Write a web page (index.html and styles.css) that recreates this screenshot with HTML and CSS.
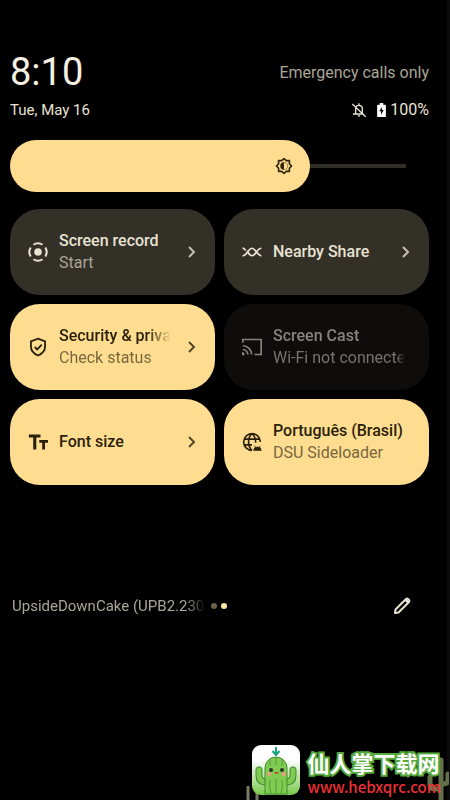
FILE: index.html
```html
<!DOCTYPE html>
<html lang="en">
<head>
    <meta charset="UTF-8">
    <meta name="viewport" content="width=device-width, initial-scale=1">
    <title>Quick Settings</title>
    <link rel="stylesheet" href="styles.css">
</head>
<body>
<div class="panel">
    <header class="status">
        <div class="row">
            <h1 class="clock">8:10</h1>
            <span class="carrier">Emergency calls only</span>
        </div>
        <div class="row">
            <span class="date">Tue, May 16</span>
            <div class="state">
                <svg class="bell" viewBox="0 0 24 24"><path d="M12 2v3M7 9.500C7 7 9 5 12 5s5 2 5 5v8M7 9v9M3 18h16M2 3l20 19" fill="none" stroke="currentColor" stroke-width="2"/><path d="M10 20h4a2 2 0 0 1-4 0z" fill="currentColor"/></svg>
                <svg class="battery" viewBox="0 0 10 16"><path d="M3 0h4v2h2a1 1 0 0 1 1 1v12a1 1 0 0 1-1 1H1a1 1 0 0 1-1-1V3a1 1 0 0 1 1-1h2z" fill="currentColor"/><path d="M5.500 4.500L2.500 9.500h2v4l3-5.500h-2z" fill="#000"/></svg>
                <span>100%</span>
            </div>
        </div>
    </header>

    <div class="brightness">
        <input type="range" min="0" max="100" value="72" aria-label="Brightness">
        <svg viewBox="0 0 24 24"><path d="M12 2l3 2.800 4.200 0 0 4.200L22 12l-2.800 3 0 4.200-4.200 0-3 2.800-3-2.800-4.200 0 0-4.200L2 12l2.800-3 0-4.200 4.200 0z" fill="none" stroke="currentColor" stroke-width="2.200" stroke-linejoin="round"/><path d="M12 7a5 5 0 0 0 0 10z" fill="currentColor"/><path d="M12 7a5 5 0 0 1 0 10" fill="none" stroke="currentColor" stroke-width=".6"/></svg>
    </div>

    <main class="tiles">
        <button class="tile">
            <svg class="icon" viewBox="0 0 24 24"><circle cx="12" cy="12" r="4.500" fill="currentColor"/><path d="M6.500 3.300a10.200 10.200 0 0 1 11 0M20.700 6.500a10.200 10.200 0 0 1 0 11M17.500 20.700a10.200 10.200 0 0 1-11 0M3.300 17.500a10.200 10.200 0 0 1 0-11" fill="none" stroke="currentColor" stroke-width="2.400"/></svg>
            <span class="label"><b>Screen record</b><small>Start</small></span>
            <svg class="arrow" viewBox="0 0 20 20"><path d="M7 5l5 5-5 5"/></svg>
        </button>
        <button class="tile">
            <svg class="icon" viewBox="0 0 24 24"><path d="M1.500 16.500c5-1 6-9 10.500-9 4 0 5 7 10.500 9M22.500 7.500c-5 1-6 9-10.500 9-3 0-4-3-5.500-5M1.500 7.500l2.500 2" fill="none" stroke="currentColor" stroke-width="2" stroke-linecap="round"/></svg>
            <span class="label"><b>Nearby Share</b></span>
            <svg class="arrow" viewBox="0 0 20 20"><path d="M7 5l5 5-5 5"/></svg>
        </button>
        <button class="tile on">
            <svg class="icon" viewBox="0 0 24 24"><path d="M12 2l8.500 3.200v6c0 5-3.300 9-8.500 11-5.200-2-8.500-6-8.500-11v-6z" fill="none" stroke="currentColor" stroke-width="2.200"/><path d="M8 12l3 3 5.500-5.800" fill="none" stroke="currentColor" stroke-width="2.200"/></svg>
            <span class="label fade"><b>Security &amp; privacy</b><small>Check status</small></span>
            <svg class="arrow" viewBox="0 0 20 20"><path d="M7 5l5 5-5 5"/></svg>
        </button>
        <button class="tile off" disabled>
            <svg class="icon" viewBox="0 0 24 24"><path d="M1 7V3h22v18h-8M1 10.500A10.500 10.500 0 0 1 11.500 21M1 15a6 6 0 0 1 6 6" fill="none" stroke="currentColor" stroke-width="2"/><path d="M0 18a3 3 0 0 1 3 4H0z" fill="currentColor"/></svg>
            <span class="label"><b>Screen Cast</b><small>Wi-Fi not connected</small></span>
        </button>
        <button class="tile on">
            <svg class="icon" viewBox="0 0 24 24"><path d="M1 3h14v3.500H10V21H6.200V6.500H1zM13.500 9.500H24v3.300h-3.600V21H17v-8.200h-3.500z" fill="currentColor"/></svg>
            <span class="label"><b>Font size</b></span>
            <svg class="arrow" viewBox="0 0 20 20"><path d="M7 5l5 5-5 5"/></svg>
        </button>
        <button class="tile on">
            <svg class="icon" viewBox="0 0 24 24"><path d="M12 22A10 10 0 1 1 22 12M2.500 8.500h19M2.500 15.500H12M12 22C6.500 17 6.500 7 12 2c3 2.500 4.500 6 4.500 11" fill="none" stroke="currentColor" stroke-width="2"/><path d="M14 22a4.500 4 0 0 1 9 0zM15 16.500l1.500 2M22 16.500l-1.500 2" fill="currentColor" stroke="currentColor"/></svg>
            <span class="label"><b>Português (Brasil)</b><small>DSU Sideloader</small></span>
        </button>
    </main>

    <div class="build">
        <span class="version">UpsideDownCake (UPB2.230407.019)</span>
        <span class="dots"><i></i><i class="current"></i></span>
        <button class="edit" aria-label="Edit">
            <svg viewBox="0 0 20 20"><path d="M3 17l.5-3.500L14 3a1.500 1.500 0 0 1 2 0l1 1a1.500 1.500 0 0 1 0 2L6.500 16.500z" fill="none" stroke="currentColor" stroke-width="2" stroke-linejoin="round"/><path d="M12.500 4.500L14.500 2.500l3 3-2 2z" fill="currentColor"/></svg>
        </button>
    </div>

    <footer class="brand">
        <svg class="desert" viewBox="0 0 210 50" aria-hidden="true"><path d="M9 50V36M18 50V42" fill="none" stroke="#777b69" stroke-width="3"/><path d="M202 50V10M191 27v8q0 4 5 4h5M209 24v6q0 4-5 4" fill="none" stroke="#65704a" stroke-width="5" stroke-linecap="round"/></svg>
        <svg class="logo" viewBox="0 0 48 50">
            <defs><linearGradient id="sky" x1="0" y1="0" x2="0" y2="1"><stop offset=".3" stop-color="#fff"/><stop offset="1" stop-color="#78c84b"/></linearGradient></defs>
            <rect width="48" height="50" rx="9" fill="url(#sky)"/>
            <path d="M7 25v5q0 7 7 7h20q7 0 7-7v-5" fill="none" stroke="#3e8b31" stroke-width="7" stroke-linecap="round"/>
            <path d="M7 25v5q0 7 7 7h20q7 0 7-7v-5" fill="none" stroke="#7fca50" stroke-width="5" stroke-linecap="round"/>
            <path d="M13 49V23a11 11 0 0 1 22 0v26z" fill="#80cc50" stroke="#3e8b31"/>
            <path d="M18 15v6M24 13v7M30 15v6M18 35q-1 7 1 14M24 34v15M30 35q1 7-1 14" fill="none" stroke="#4d9c38"/>
            <circle cx="19" cy="25" r="2" fill="#27352a"/><circle cx="30" cy="25" r="2" fill="#27352a"/>
            <circle cx="17" cy="29" r="2" fill="#f49a82"/><circle cx="32" cy="29" r="2" fill="#f49a82"/>
            <path d="M22 27q2.500 4 5 0z" fill="#c84235"/>
            <path d="M24 2v7M20.500 6l3.500 4 3.500-4" fill="none" stroke="#17a180" stroke-width="2"/>
        </svg>
        <div class="site">
            <strong lang="zh-CN">仙人掌下载网</strong>
            <a href="#">www.hebxqrc.com</a>
        </div>
    </footer>
</div>
</body>
</html>
```
FILE: styles.css
```css
* {
    box-sizing: border-box;
    margin: 0;
    padding: 0;
}

body {
    background: #000;
    color: #e8e3d3;
    font-family: Roboto, "Noto Sans CJK SC", sans-serif;
    font-size: 16px;
}

svg {
    display: block;
    flex: none;
}

button {
    border: 0;
    font: inherit;
    cursor: pointer;
}

.panel {
    display: flex;
    flex-direction: column;
    min-height: 100vh;
    padding: 50px 18px 0 10px;
    border-right: 3px solid #0b0b0b;
}

/* clock, date and status icons */
.row {
    display: flex;
    align-items: center;
    justify-content: space-between;
}

.clock {
    font-size: 38px;
    font-weight: 400;
    line-height: 44px;
    color: #f5f0e1;
}

.carrier {
    color: #aaa596;
}

.date,
.state {
    font-size: 15px;
    line-height: 32px;
}

.state {
    display: flex;
    align-items: center;
    gap: 4px;
    font-size: 16px;
}

.bell {
    width: 16px;
    height: 16px;
    margin-right: 6px;
}

.battery {
    width: 9px;
    height: 14px;
    color: #fff;
}

/* brightness slider */
.brightness {
    position: relative;
    height: 52px;
    margin: 14px 23px 17px 0;
}

.brightness input {
    display: block;
    width: 100%;
    height: 52px;
    appearance: none;
    border-radius: 26px 0 0 26px;
    background: linear-gradient(#ffdd90, #ffdd90) left / 69% 100% no-repeat,
                linear-gradient(#302e25, #302e25) center / 100% 4px no-repeat;
}

.brightness input::-webkit-slider-thumb {
    appearance: none;
    width: 52px;
    height: 52px;
    border-radius: 50%;
    background: #ffdd90;
}

.brightness svg {
    position: absolute;
    top: 17px;
    left: 67%;
    width: 18px;
    height: 18px;
    color: #30250c;
    pointer-events: none;
}

/* tiles */
.tiles {
    display: grid;
    grid-template-columns: 1fr 1fr;
    gap: 9px;
}

.tile {
    display: flex;
    align-items: center;
    min-width: 0;
    height: 86px;
    padding: 0 13px 0 18px;
    border-radius: 30px;
    background: #333027;
    color: #e8e3d3;
    text-align: left;
}

.tile.on {
    background: #ffdd90;
    color: #2b210b;
}

.tile.off {
    background: #0e0d0b;
    color: #87847b;
}

.icon {
    width: 20px;
    height: 20px;
    margin-right: 11px;
}

.label {
    flex: 1;
    min-width: 0;
    margin-right: 11px;
    overflow: hidden;
    white-space: nowrap;
    line-height: 22px;
}

.label b,
.label small {
    display: block;
    font-size: 16px;
    font-weight: 500;
}

.label small {
    font-weight: 400;
    color: #aaa596;
}

.on .label small {
    color: #78673f;
}

.off .label small {
    color: #77746b;
}

.label.fade {
    mask-image: linear-gradient(to left, transparent, #000 24px);
}

.off .label {
    mask-image: linear-gradient(to left, transparent, #000 8px);
}

.arrow {
    width: 20px;
    height: 20px;
    fill: none;
    stroke: currentColor;
    stroke-width: 2;
    opacity: .8;
}

/* build number and page dots */
.build {
    display: flex;
    align-items: center;
    height: 32px;
    margin: 105px 17px 0 2px;
}

.version {
    width: 194px;
    overflow: hidden;
    white-space: nowrap;
    font-size: 15px;
    color: #aaa596;
    mask-image: linear-gradient(to left, transparent, #000 20px);
}

.dots {
    display: flex;
    gap: 4px;
    margin-left: 5px;
}

.dots i {
    width: 6px;
    height: 6px;
    border-radius: 50%;
    background: #6b6548;
}

.dots .current {
    background: #ffe6a0;
}

.edit {
    margin-left: auto;
    background: none;
    color: #e8e3d3;
}

.edit svg {
    width: 20px;
    height: 20px;
}

/* site mark */
.brand {
    position: relative;
    display: flex;
    justify-content: flex-end;
    gap: 8px;
    margin: auto -12px 0 0;
    padding-bottom: 5px;
}

.desert {
    position: absolute;
    right: -8px;
    bottom: 0;
    width: 210px;
    height: 50px;
}

.logo {
    position: relative;
    width: 48px;
    height: 50px;
}

.site {
    position: relative;
    padding-top: 6px;
    white-space: nowrap;
}

.site strong,
.site a {
    display: block;
}

.site strong {
    font-size: 22px;
    font-weight: 700;
    line-height: 28px;
    color: #fff;
    -webkit-text-stroke: 4px #55a83c;
    paint-order: stroke fill;
}

.site a {
    font-family: "Noto Sans CJK SC", sans-serif;
    font-size: 15px;
    font-weight: 500;
    line-height: 16px;
    color: #ee2f35;
    text-decoration: none;
}
```
